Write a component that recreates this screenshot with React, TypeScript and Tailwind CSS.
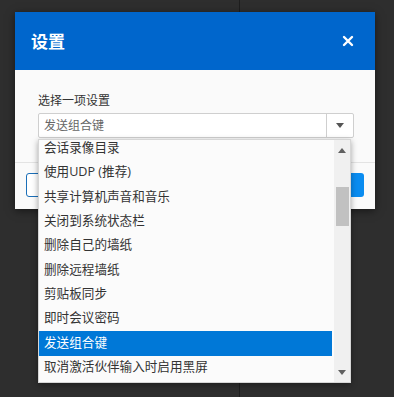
import React from "react";

const items = [
  "会话录像目录",
  "使用UDP (推荐)",
  "共享计算机声音和音乐",
  "关闭到系统状态栏",
  "删除自己的墙纸",
  "删除远程墙纸",
  "剪贴板同步",
  "即时会议密码",
  "发送组合键",
  "取消激活伙伴输入时启用黑屏",
];

const font = { fontFamily: '"Open Sans", "Noto Sans CJK SC", sans-serif' };

export default function App() {
  return (
    <div
      className="relative w-[394px] h-[397px] bg-[#2e2e2e] overflow-hidden flex"
      style={font}
    >
      <div className="w-[240px] h-full border-r border-[#1e1e1e]" />
      <div className="flex-1 h-full" />

      {/* Dialog */}
      <div className="absolute left-[15px] top-[12px] w-[360px] h-[197px] bg-[#fafafa] shadow-[0_2px_8px_rgba(0,0,0,0.5)] flex flex-col">
        <div className="h-[58px] bg-[#0066cc] flex items-center justify-between pl-[16px] pr-[21px] shrink-0">
          <span className="text-white text-[17px] font-bold leading-none">设置</span>
          <svg width="12" height="12" viewBox="0 0 12 12">
            <path d="M2 2 L10 10 M10 2 L2 10" stroke="#fff" strokeWidth="2.4" strokeLinecap="round" />
          </svg>
        </div>
        <div className="pl-[23px] pt-[23px]">
          <div className="text-[12px] leading-[16px] text-[#333]">选择一项设置</div>
          <div className="mt-[4px] w-[316px] h-[25px] border border-[#cfcfcf] rounded-[2px] bg-white flex items-center">
            <span className="flex-1 pl-[5px] text-[12px] text-[#666]">发送组合键</span>
            <div className="w-[27px] h-full border-l border-[#cfcfcf] flex items-center justify-center">
              <svg width="8" height="5" viewBox="0 0 8 5">
                <path d="M0 0 L8 0 L4 5 Z" fill="#555" />
              </svg>
            </div>
          </div>
        </div>
        <div className="mt-[24px] border-t border-[#e3e3e3]" />
        <div className="flex justify-between px-[11px] mt-[10px]">
          <div className="w-[110px] h-[24px] border border-[#1b6fb8] rounded-[3px] bg-white" />
          <div className="w-[110px] h-[24px] rounded-[3px] bg-[#0a8cf0]" />
        </div>
      </div>

      {/* Dropdown list */}
      <div className="absolute left-[38px] top-[139px] w-[313px] h-[244px] bg-[#fbfbfb] border border-[#d6d6d6] shadow-[0_2px_6px_rgba(0,0,0,0.35)] flex overflow-hidden">
        <div className="flex-1 overflow-hidden pr-[2px]">
          <div className="-mt-[4px]">
            {items.map((t) => {
              const sel = t === "发送组合键";
              return (
                <div
                  key={t}
                  className={
                    "h-[24.4px] flex items-center pl-[5px] text-[12.6px] whitespace-nowrap " +
                    (sel ? "bg-[#0078d7] text-white" : "text-[#333]")
                  }
                >
                  {t}
                </div>
              );
            })}
          </div>
        </div>
        <div className="w-[16px] h-full bg-[#f0f0f0] flex flex-col items-center">
          <div className="h-[20px] flex items-center justify-center">
            <svg width="8" height="5" viewBox="0 0 8 5">
              <path d="M0 5 L8 5 L4 0 Z" fill="#606060" />
            </svg>
          </div>
          <div className="mt-[27px] w-[13px] h-[39px] bg-[#c1c1c1]" />
          <div className="flex-1" />
          <div className="h-[20px] flex items-center justify-center">
            <svg width="8" height="5" viewBox="0 0 8 5">
              <path d="M0 0 L8 0 L4 5 Z" fill="#606060" />
            </svg>
          </div>
        </div>
      </div>
    </div>
  );
}
